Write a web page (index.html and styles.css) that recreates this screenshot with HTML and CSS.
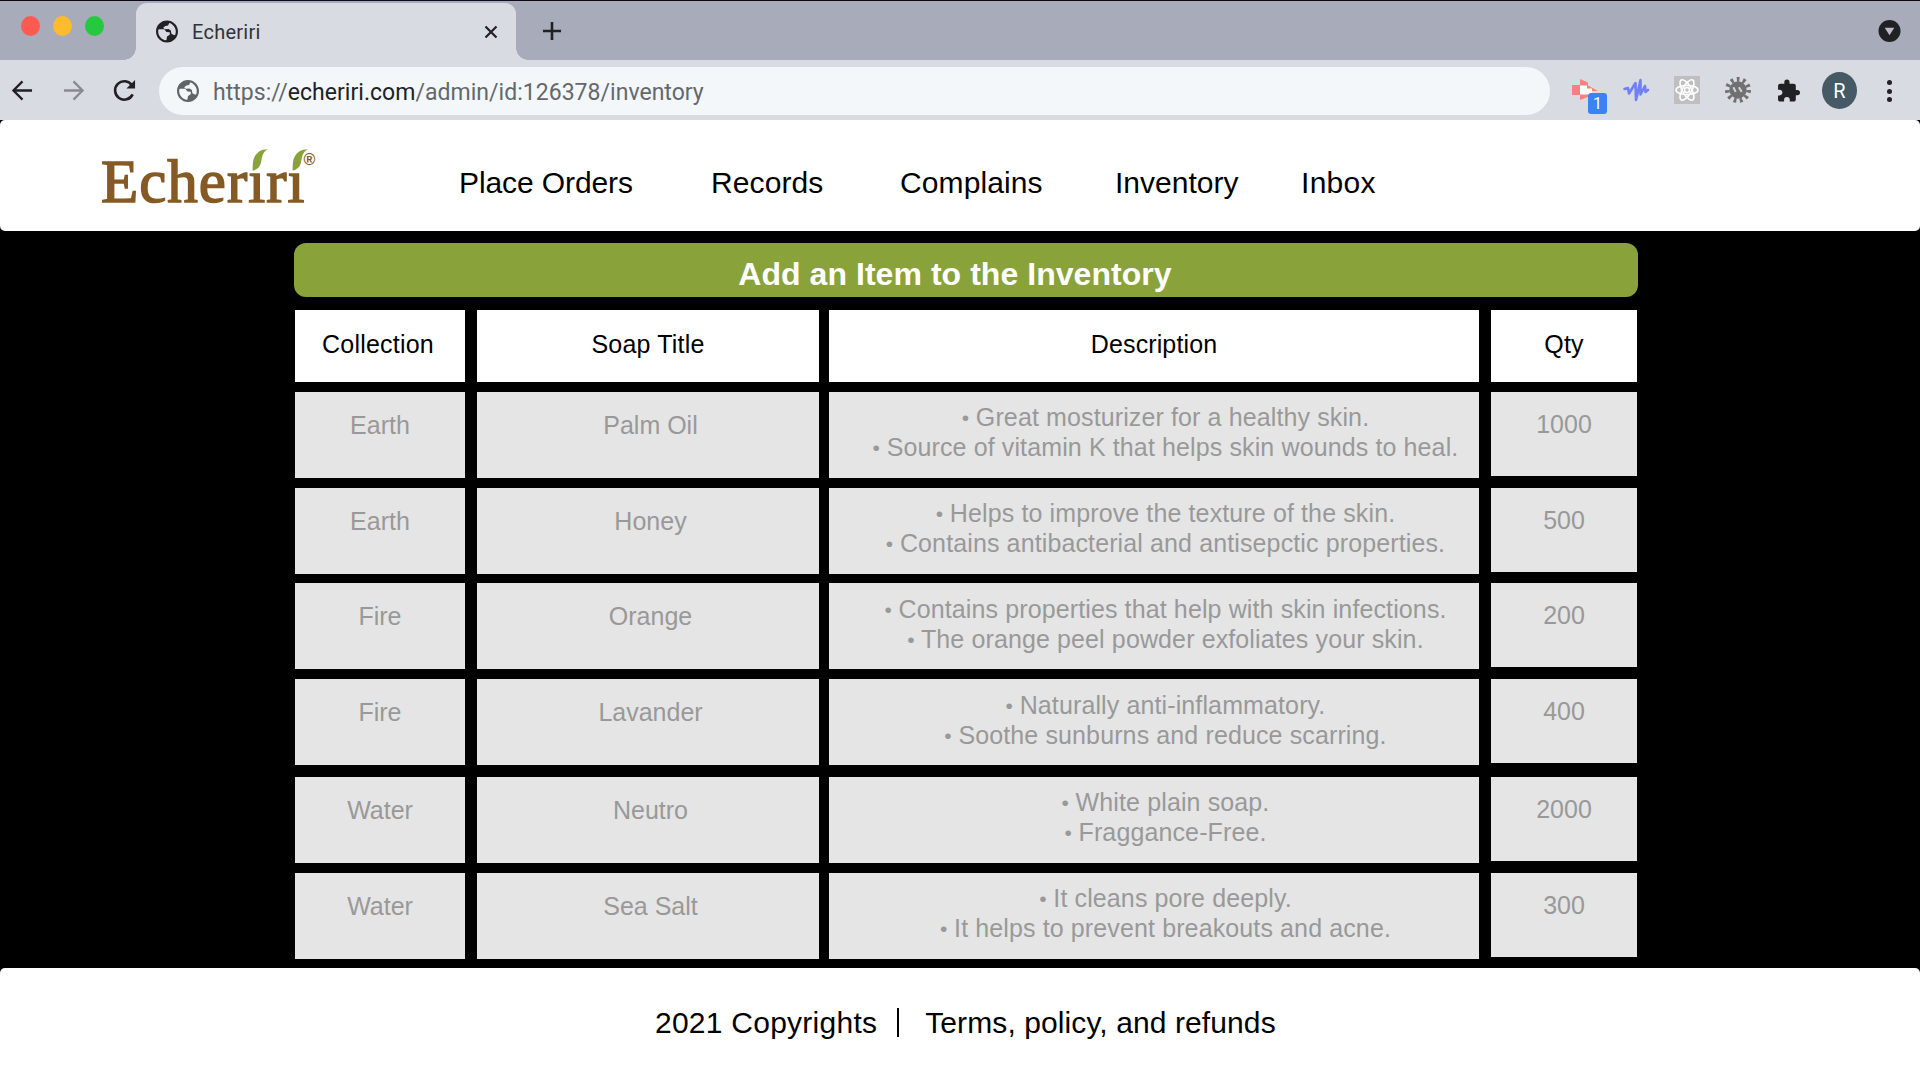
FILE: index.html
```html
<!DOCTYPE html>
<html lang="en">
<head>
<meta charset="utf-8">
<title>Echeriri</title>
<link rel="stylesheet" href="styles.css">
</head>
<body>
<svg class="defs" width="0" height="0" aria-hidden="true">
  <symbol id="globe" viewBox="2 2 20 20"><path fill="currentColor" d="M12 2C6.48 2 2 6.48 2 12s4.48 10 10 10 10-4.48 10-10S17.52 2 12 2zm-1 17.93C7.05 19.44 4 16.08 4 12c0-.62.08-1.21.21-1.79L5 10h4.500l2 2.500 3 .2v2.300l-2.500 1.500-.5 3.200zM19.300 15.500c-1-.5-2.300-.8-3.300-1.500l-.5-3-2-1.200-3.500.2-1.500-1.500 2-1.500 2.500-.500 1-2.200C16.500 4.600 20 8 20 12c0 1.300-.3 2.500-.7 3.500z"/></symbol>
  <symbol id="leaf" viewBox="0 0 16 22"><path fill="#8aa23a" d="M15.800.3C9 0 3.500 4 1.500 10.500.6 14 .8 18 .5 21.800 4.500 20.800 7.300 18.500 8.600 15 10 10.500 9.500 3.500 15.800.3z"/></symbol>
</svg>
<div class="tabbar">
  <div class="lights"><i class="red"></i><i class="amber"></i><i class="green"></i></div>
  <div class="tab">
    <svg class="tab-globe"><use href="#globe"/></svg>
    <span class="tab-title">Echeriri</span>
    <svg class="close" viewBox="0 0 14 14"><path d="M1.500 1.500l11 11M12.500 1.500l-11 11"/></svg>
  </div>
  <svg class="plus" viewBox="0 0 20 20"><path d="M10 1v18M1 10h18"/></svg>
  <svg class="tabsearch" viewBox="0 0 24 24"><circle cx="12" cy="12" r="11.500" fill="#1f2125"/><path d="M7 8.500h10l-5 8z" fill="#b9bcc8"/></svg>
</div>
<div class="toolbar">
  <svg class="nav-icon back" viewBox="0 0 22 22"><path d="M21 11H2M11 1.500L1.500 11l9.500 9.500"/></svg>
  <svg class="nav-icon forward" viewBox="0 0 22 22"><path d="M1 11h19M11 1.500l9.500 9.500-9.500 9.500"/></svg>
  <svg class="nav-icon reload" viewBox="0 0 24 24"><path d="M20.500 16a9.600 9.600 0 1 1-.8-9.500"/><path class="solid" d="M23 1v9h-9z"/></svg>
  <div class="address">
    <svg class="url-globe"><use href="#globe"/></svg>
    <span class="url">https://<b>echeriri.com</b>/admin/id:126378/inventory</span>
  </div>
  <div class="extensions">
    <div class="ext-red">
      <svg viewBox="0 0 26 22"><path fill="#fa7f80" d="M0 6h8V0l8 3.500v3L26 12H16v6l-8 3v-5H0z"/><path fill="#fff" d="M8 6.500h7v3h5v6H8z"/></svg>
      <span class="badge">1</span>
    </div>
    <svg class="wave" viewBox="0 0 26 24"><path d="M1.500 11l3.500-1 1 5.500L12.500 5l.5 17L17.500 2v14.500L22 8l.5 6 2.500-2"/></svg>
    <svg class="react" viewBox="0 0 26 28"><path fill="#bfbfc1" d="M0 0h26v28H0z"/><g fill="none" stroke="#fff" stroke-width="1.600"><ellipse cx="13" cy="14" rx="11" ry="4.500"/><ellipse cx="13" cy="14" rx="11.500" ry="4.500" transform="rotate(60 13 14)"/><ellipse cx="13" cy="14" rx="11.500" ry="4.500" transform="rotate(120 13 14)"/></g><circle cx="13" cy="14" r="2.500" fill="#bfbfc1" stroke="#fff" stroke-width="1.500"/></svg>
    <svg class="gear" viewBox="0 0 28 28"><circle cx="14" cy="14" r="11.500" fill="none" stroke="#707070" stroke-width="5" stroke-dasharray="2.900 3.669"/><circle cx="14" cy="14" r="9.300" fill="#707070"/><path d="M9 11l2.500 5M15 11l3 5" stroke="#d2d4d8" stroke-width="2.200"/></svg>
    <svg class="puzzle" viewBox="1 1 22 21"><path fill="#1f2125" d="M20.500 11H19V7c0-1.100-.9-2-2-2h-4V3.500a2.500 2.500 0 0 0-5 0V5H4c-1.100 0-2 .9-2 2v3.800h1.500c1.500 0 2.700 1.200 2.700 2.700s-1.200 2.700-2.700 2.700H2V20c0 1.100.9 2 2 2h3.800v-1.500a2.700 2.700 0 0 1 5.400 0V22H17c1.100 0 2-.9 2-2v-4h1.500a2.500 2.500 0 0 0 0-5z"/></svg>
    <span class="avatar">R</span>
    <div class="menu"><i></i><i></i><i></i></div>
  </div>
</div>
<div class="page">
  <header class="site-header">
    <a class="logo"><span class="word">Echer<span class="i">ı<svg><use href="#leaf"/></svg></span>r<span class="i">ı<svg><use href="#leaf"/></svg></span></span><span class="reg">®</span></a>
    <nav class="nav">
      <a>Place Orders</a><a>Records</a><a>Complains</a><a>Inventory</a><a>Inbox</a>
    </nav>
  </header>
  <main class="inventory">
    <h1 class="banner">Add an Item to the Inventory</h1>
    <div class="row head"><div class="collection">Collection</div><div class="title">Soap Title</div><div class="desc">Description</div><div class="qty">Qty</div></div>
    <div class="row"><div class="collection">Earth</div><div class="title">Palm Oil</div><div class="desc"><b>•</b> Great mosturizer for a healthy skin.<br><b>•</b> Source of vitamin K that helps skin wounds to heal.</div><div class="qty">1000</div></div>
    <div class="row"><div class="collection">Earth</div><div class="title">Honey</div><div class="desc"><b>•</b> Helps to improve the texture of the skin.<br><b>•</b> Contains antibacterial and antisepctic properties.</div><div class="qty">500</div></div>
    <div class="row"><div class="collection">Fire</div><div class="title">Orange</div><div class="desc"><b>•</b> Contains properties that help with skin infections.<br><b>•</b> The orange peel powder exfoliates your skin.</div><div class="qty">200</div></div>
    <div class="row"><div class="collection">Fire</div><div class="title">Lavander</div><div class="desc"><b>•</b> Naturally anti-inflammatory.<br><b>•</b> Soothe sunburns and reduce scarring.</div><div class="qty">400</div></div>
    <div class="row water"><div class="collection">Water</div><div class="title">Neutro</div><div class="desc"><b>•</b> White plain soap.<br><b>•</b> Fraggance-Free.</div><div class="qty">2000</div></div>
    <div class="row"><div class="collection">Water</div><div class="title">Sea Salt</div><div class="desc"><b>•</b> It cleans pore deeply.<br><b>•</b> It helps to prevent breakouts and acne.</div><div class="qty">300</div></div>
  </main>
  <footer class="site-footer"><span>2021 Copyrights</span><i class="divider"></i><span class="terms">Terms, policy, and refunds</span></footer>
</div>
</body>
</html>
```
FILE: styles.css
```css
* { box-sizing: border-box; }
body { margin: 0; width: 1920px; height: 1080px; overflow: hidden; background: #000; font-family: "Liberation Sans", Arial, sans-serif; }
svg { display: block; flex: none; overflow: visible; }
.defs { position: absolute; }

.tabbar { height: 60px; background: #a8abb9; border-top: 1px solid #0c0814; display: flex; }
.lights { width: 136px; padding: 15px 0 0 21px; display: flex; gap: 13px; }
.lights i { width: 19px; height: 20px; border-radius: 50%; }
.red { background: #ff5a52; }
.amber { background: #fdbb2d; }
.green { background: #25c93f; }
.tab { position: relative; width: 380px; height: 57px; margin-top: 2px; padding: 0 18px 0 20px; display: flex; align-items: center; background: #d8dbe1; border-radius: 11px 11px 0 0; }
.tab::before, .tab::after { content: ""; position: absolute; bottom: 0; width: 12px; height: 12px; }
.tab::before { left: -12px; background: radial-gradient(circle at 0 0, transparent 11.5px, #d8dbe1 12px); }
.tab::after { right: -12px; background: radial-gradient(circle at 100% 0, transparent 11.5px, #d8dbe1 12px); }
.tab-globe { width: 22px; height: 23px; color: #1f2125; }
.tab-title { margin-left: 14px; flex: 1; font: 20px Roboto, sans-serif; letter-spacing: 0.25px; color: #303338; }
.close { width: 14px; height: 14px; fill: none; stroke: #1f2125; stroke-width: 2.2; }
.plus { width: 20px; height: 20px; margin: 20px 0 0 26px; stroke: #1f2125; stroke-width: 2.6; }
.tabsearch { width: 23px; height: 24px; margin: 18px 19px 0 auto; }

.toolbar { height: 60px; background: #d8dbe1; display: flex; align-items: center; }
.nav-icon { width: 21px; height: 21px; fill: none; stroke: #1f2125; stroke-width: 2.4; }
.back { margin-left: 12px; }
.forward { margin-left: 30px; stroke: #888b90; }
.reload { width: 23px; height: 23px; margin-left: 29px; stroke-width: 2.7; }
.reload .solid { fill: #1f2125; stroke: none; }
.address { width: 1391px; height: 48px; margin: 2px 0 0 23px; padding-left: 18px; border-radius: 24px; background: #f3f7fa; display: flex; align-items: center; }
.url-globe { width: 22px; height: 22px; color: #5f6469; }
.url { margin: 2px 0 0 14px; font: 23px Roboto, sans-serif; letter-spacing: 0.03px; color: #64686d; white-space: nowrap; }
.url b { font-weight: 400; color: #202226; }
.extensions { flex: 1; display: flex; align-items: center; }
.ext-red { position: relative; margin-left: 22px; }
.ext-red svg { width: 26px; height: 22px; }
.badge { position: absolute; left: 16px; top: 14px; width: 19px; height: 21px; border-radius: 3px; background: #3b82f6; color: #fff; font: 16px/22px Roboto, sans-serif; text-align: center; }
.wave { width: 26px; height: 24px; margin-left: 25px; fill: none; stroke: #6f80fa; stroke-width: 2.6; stroke-linejoin: round; stroke-linecap: round; }
.react { width: 26px; height: 28px; margin-left: 25px; }
.gear { width: 26px; height: 28px; margin-left: 25px; }
.puzzle { width: 23px; height: 25px; margin-left: 26px; }
.avatar { width: 35px; height: 37px; margin-left: 22px; border-radius: 50%; background: #455a64; color: #fff; font: 20px/38px Roboto, sans-serif; text-align: center; }
.menu { margin: 2px 0 0 30px; display: grid; gap: 3.5px; }
.menu i { width: 5px; height: 5px; border-radius: 50%; background: #1f2125; }

.page { height: 960px; display: flex; flex-direction: column; background: #000; }
.site-header { height: 111px; flex: none; padding-left: 101px; display: flex; background: #fff; border-radius: 5px; }
.logo { width: 358px; padding-top: 27px; display: flex; color: #855a24; }
.word { font: 61px/70px "Liberation Serif", serif; letter-spacing: 1px; -webkit-text-stroke: 1.5px #855a24; }
.i { position: relative; }
.i svg { position: absolute; left: 4px; top: 1px; width: 16px; height: 22px; }
.reg { margin: 3px 0 0 -2px; font: bold 16px/20px "Liberation Sans", sans-serif; }
.nav { padding-top: 46px; display: flex; font-size: 30px; line-height: 34px; color: #000; }
.nav a { white-space: nowrap; }
.nav a:nth-child(1) { width: 252px; letter-spacing: -0.1px; }
.nav a:nth-child(2) { width: 189px; letter-spacing: 0.1px; }
.nav a:nth-child(3) { width: 215px; letter-spacing: 0.1px; }
.nav a:nth-child(4) { width: 186px; }
.nav a:nth-child(5) { letter-spacing: 0.3px; }

.inventory { flex: 1; width: 1344px; margin: 12px 0 0 294px; }
.banner { height: 54px; margin: 0 0 13px; padding-right: 22px; border-radius: 12px; background: #8aa23a; color: #fff; font-size: 32px; line-height: 62px; letter-spacing: 0.05px; text-align: center; }
.row { display: grid; grid-template-columns: 170px 342px 648px 146px; column-gap: 12px; height: 86px; margin: 0 0 9.8px 1px; align-items: start; font-size: 25px; line-height: 30px; text-align: center; color: #999; }
.row > div { height: 100%; background: #e5e5e5; padding-top: 18px; white-space: nowrap; }
.row > .title { padding-left: 5px; }
.row > .desc { margin-left: -2px; padding: 10.4px 0 0 23px; letter-spacing: 0.12px; }
.desc b { display: inline-block; width: 7px; font-size: 21px; line-height: 20px; font-weight: 400; vertical-align: 1px; }
.row > .qty { height: 84px; padding-top: 17px; }
.row.head { height: 72px; color: #000; letter-spacing: 0.2px; }
.row.head > div { height: 100%; background: #fff; padding: 19px 0 0; }
.row.head > .collection { padding-right: 4px; }
.row.water { margin-top: 11.6px; }
.site-footer { height: 112px; flex: none; padding: 38px 0 0 655px; display: flex; background: #fff; border-radius: 5px 5px 0 0; font-size: 30px; line-height: 34px; letter-spacing: 0.25px; white-space: nowrap; }
.divider { width: 2px; height: 29px; margin: 2px 26px 0 20px; background: #000; }
.terms { letter-spacing: 0.1px; }
```
